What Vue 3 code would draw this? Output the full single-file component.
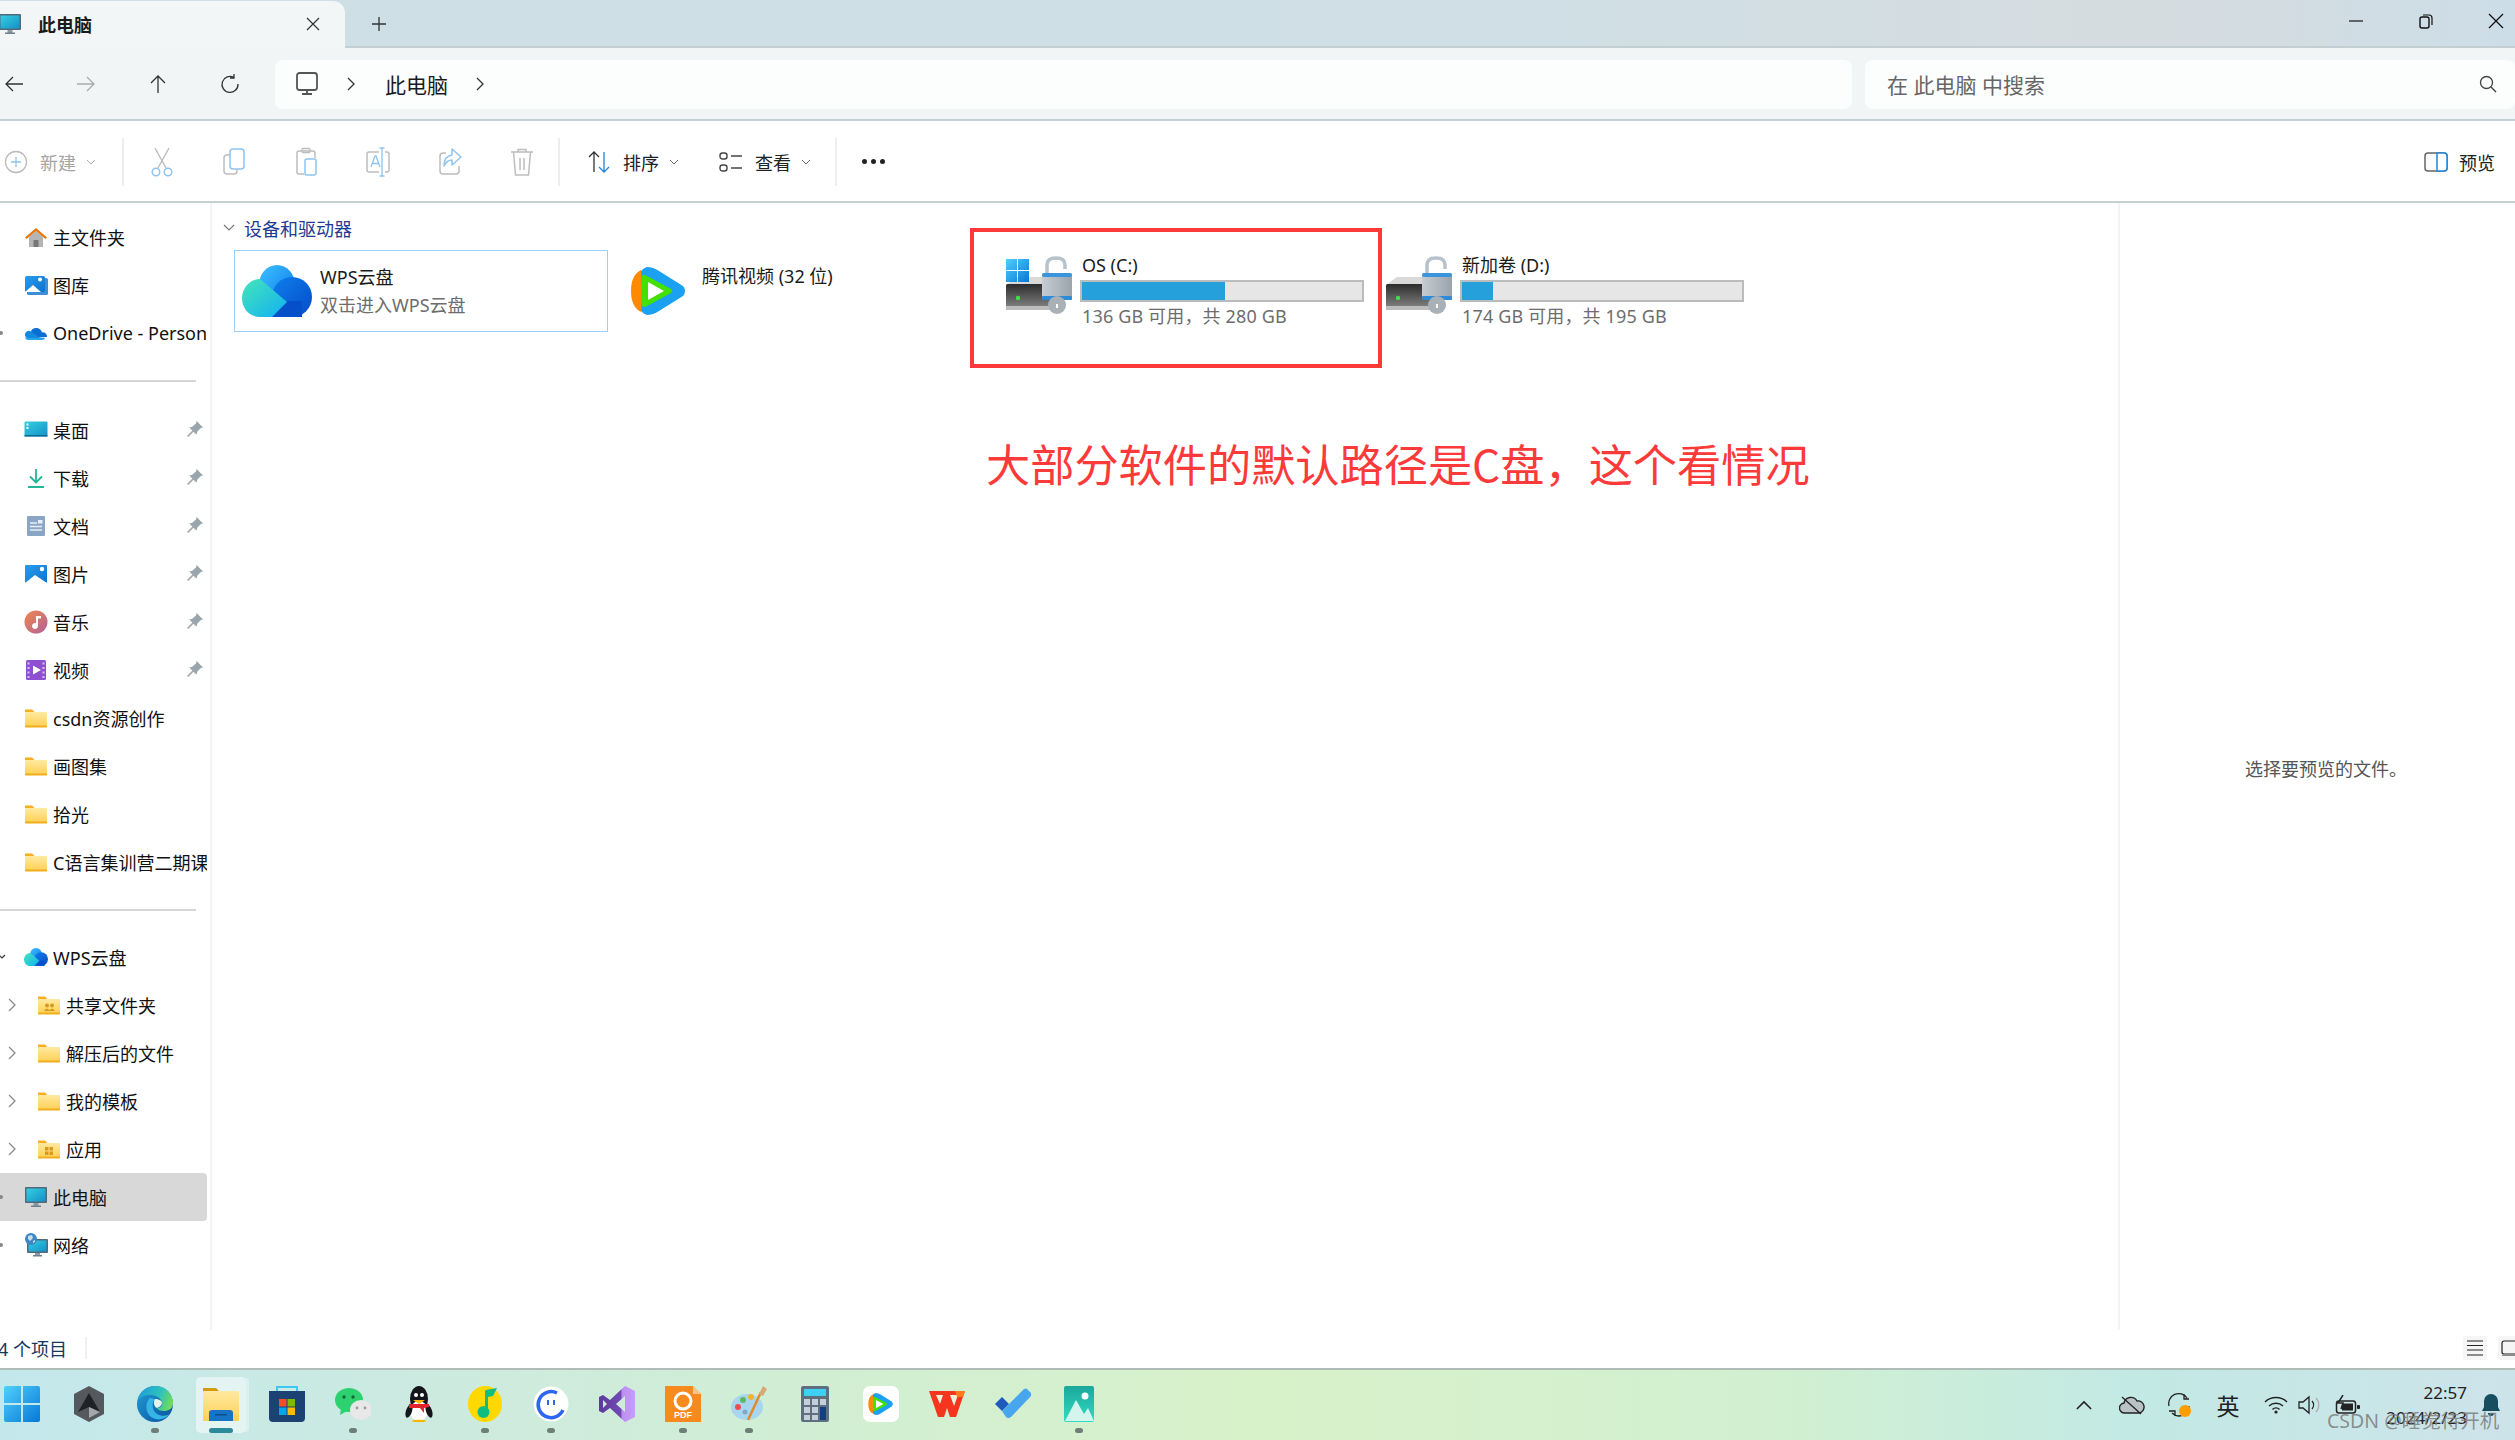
<script setup>
// left navigation, split in the three groups the pane shows
const quickLinks = [
  { label: '主文件夹', icon: 'home' },
  { label: '图库', icon: 'gallery' },
  { label: 'OneDrive - Personal', icon: 'onedrive', dot: true },
]
const pinned = [
  { label: '桌面', icon: 'desktop', pin: true },
  { label: '下载', icon: 'download', pin: true },
  { label: '文档', icon: 'docs', pin: true },
  { label: '图片', icon: 'pictures', pin: true },
  { label: '音乐', icon: 'music', pin: true },
  { label: '视频', icon: 'video', pin: true },
  { label: 'csdn资源创作', icon: 'folder' },
  { label: '画图集', icon: 'folder' },
  { label: '拾光', icon: 'folder' },
  { label: 'C语言集训营二期课', icon: 'folder' },
]
const tree = [
  { label: 'WPS云盘', icon: 'wps', open: true },
  { label: '共享文件夹', icon: 'folder-share', child: true },
  { label: '解压后的文件', icon: 'folder', child: true },
  { label: '我的模板', icon: 'folder', child: true },
  { label: '应用', icon: 'folder-app', child: true },
  { label: '此电脑', icon: 'monitor', dot: true, active: true },
  { label: '网络', icon: 'network', dot: true },
]
const groups = [quickLinks, pinned, tree]

const tools = ['cut', 'copy', 'paste', 'rename', 'share', 'trash']

const drives = [
  { id: 'c', name: 'OS (C:)', used: 51, info: '136 GB 可用，共 280 GB' },
  { id: 'd', name: '新加卷 (D:)', used: 11, info: '174 GB 可用，共 195 GB' },
]

const apps = [
  { icon: 'tb-hex' },
  { icon: 'tb-edge', dot: true },
  { icon: 'tb-explorer', active: true },
  { icon: 'tb-store' },
  { icon: 'tb-wechat', dot: true },
  { icon: 'tb-qq' },
  { icon: 'tb-music', dot: true },
  { icon: 'tb-face', dot: true },
  { icon: 'tb-vs' },
  { icon: 'tb-pdf', dot: true },
  { icon: 'tb-paint', dot: true },
  { icon: 'tb-calc' },
  { icon: 'tb-tencent' },
  { icon: 'tb-wps' },
  { icon: 'tb-todo' },
  { icon: 'tb-photos', dot: true },
]
</script>

<template>
  <div class="window">
    <!-- shared icon sprites -->
    <svg class="sprites" width="0" height="0" aria-hidden="true">
      <defs>
        <linearGradient id="g-folder" x1="0" y1="0" x2="0" y2="1"><stop offset="0" stop-color="#ffe9a0" /><stop offset="1" stop-color="#ffd155" /></linearGradient>
        <linearGradient id="g-screen" x1="0" y1="0" x2="1" y2="1"><stop offset="0" stop-color="#35cfe0" /><stop offset="1" stop-color="#1490c8" /></linearGradient>
        <linearGradient id="g-pic" x1="0" y1="0" x2="1" y2="1"><stop offset="0" stop-color="#2a9cec" /><stop offset="1" stop-color="#0c72cf" /></linearGradient>
        <linearGradient id="g-music" x1="0" y1="0" x2="1" y2="1"><stop offset="0" stop-color="#f0884a" /><stop offset="1" stop-color="#b2609e" /></linearGradient>
        <linearGradient id="g-wps-top" x1="0" y1="0" x2="1" y2="1"><stop offset="0" stop-color="#3dc0ff" /><stop offset="1" stop-color="#0a78ea" /></linearGradient>
        <linearGradient id="g-wps-right" x1="0" y1="0" x2="1" y2="1"><stop offset="0" stop-color="#0e7fee" /><stop offset="1" stop-color="#044cc6" /></linearGradient>
        <linearGradient id="g-wps-left" x1="0" y1="0" x2="1" y2="1"><stop offset="0" stop-color="#45e6b8" /><stop offset="1" stop-color="#10b0f4" /></linearGradient>
        <linearGradient id="g-drive" x1="0" y1="0" x2="0" y2="1"><stop offset="0" stop-color="#2c2c2c" /><stop offset="1" stop-color="#8a8a8a" /></linearGradient>
        <linearGradient id="g-lock" x1="0" y1="0" x2="1" y2="0"><stop offset="0" stop-color="#c6ccd2" /><stop offset="1" stop-color="#9aa4ae" /></linearGradient>
        <linearGradient id="g-win" x1="0" y1="0" x2="1" y2="1"><stop offset="0" stop-color="#4fd0fb" /><stop offset="1" stop-color="#0678d8" /></linearGradient>
        <linearGradient id="g-edge" x1="0" y1="0" x2="1" y2="1"><stop offset="0" stop-color="#1fa0d8" /><stop offset="1" stop-color="#0b4f9e" /></linearGradient>
        <linearGradient id="g-edge2" x1="0" y1="0.300" x2="1" y2="0.600"><stop offset="0" stop-color="#1f9fdc" /><stop offset="0.600" stop-color="#2fc3b8" /><stop offset="1" stop-color="#74dc58" /></linearGradient>
        <linearGradient id="g-vs" x1="0" y1="0" x2="1" y2="0"><stop offset="0" stop-color="#5b3a9a" /><stop offset="0.620" stop-color="#7249b4" /><stop offset="0.630" stop-color="#bb8ff2" /><stop offset="1" stop-color="#c79df6" /></linearGradient>
        <linearGradient id="g-photos" x1="0" y1="0" x2="0" y2="1"><stop offset="0" stop-color="#1ca79a" /><stop offset="1" stop-color="#30dcc0" /></linearGradient>

        <symbol id="folder" viewBox="0 0 24 20"><path d="M1 1.500h7l2.500 2.500H1z" fill="#f4b01f" /><rect x="1" y="4" width="22" height="14.500" rx="1" fill="url(#g-folder)" /><path d="M1 17.500h22v1a1 1 0 0 1-1 1H2a1 1 0 0 1-1-1z" fill="#f0ae1e" /></symbol>
        <symbol id="folder-share" viewBox="0 0 24 20"><use href="#folder" /><circle cx="10" cy="10.500" r="2" fill="#d99a1c" /><circle cx="15" cy="10.500" r="2" fill="#d99a1c" /><path d="M7 16q3-5 6 0zM12 16q3-5 6 0z" fill="#d99a1c" /></symbol>
        <symbol id="folder-app" viewBox="0 0 24 20"><use href="#folder" /><path d="M8 8h3.500v3.500H8zM12.500 8H16v3.500h-3.500zM8 12.500h3.500V16H8zM12.500 12.500H16V16h-3.500z" fill="#d99a1c" /></symbol>
        <symbol id="home" viewBox="0 0 24 24"><path d="M5 12v10h14V12l-7-6z" fill="#b4b4b4" /><rect x="9.500" y="15" width="5" height="7" fill="#777" /><path d="M1 12.500 12 3l11 9.500-1.600 1.400L12 6 2.600 13.900z" fill="#e8760e" /></symbol>
        <symbol id="gallery" viewBox="0 0 24 24"><rect x="3" y="5" width="21" height="17" rx="1.500" fill="#3f8fd6" /><rect x="1" y="3" width="20" height="16" rx="1.500" fill="url(#g-pic)" /><path d="M1 19 9 12l8 7z" fill="#fff" /><circle cx="16" cy="6.500" r="2" fill="#fff" /></symbol>
        <symbol id="onedrive" viewBox="0 0 24 24"><path d="M7 10a6 6 0 0 1 11 1.500 4 4 0 0 1 5 4.500l-14 1z" fill="#0a6fd0" /><path d="M1 15a4 4 0 0 1 6-4.500l9 6.500H3z" fill="#1489e0" /><path d="M3 17h18a3 3 0 0 1-2.500 2H4.500A3 3 0 0 1 1 16z" fill="#27a6ef" /></symbol>
        <symbol id="desktop" viewBox="0 0 24 24"><rect x="0.500" y="3.500" width="23" height="15" rx="1" fill="url(#g-screen)" /><path d="M2.500 5.500h2v2h-2zM2.500 9h2v2h-2z" fill="#fff" /><rect x="0.500" y="17" width="23" height="1.500" fill="#0e6d95" /></symbol>
        <symbol id="download" viewBox="0 0 24 24"><path d="M12 3v13M6 10.500l6 6 6-6M4 21h16" fill="none" stroke="#22b59a" stroke-width="1.800" /></symbol>
        <symbol id="docs" viewBox="0 0 24 24"><rect x="3" y="2" width="18" height="20" rx="1" fill="#8ba5c4" /><path d="M6 9h7M6 12.500h12M6 16h12" stroke="#e8eef5" stroke-width="1.400" /><rect x="14" y="6" width="4.500" height="3.500" fill="#e8eef5" /></symbol>
        <symbol id="pictures" viewBox="0 0 24 24"><rect x="1" y="3" width="22" height="18" rx="1" fill="url(#g-pic)" /><path d="M1 21l10-8 12 8z" fill="#fff" /><circle cx="18" cy="7" r="2.200" fill="#fff" /></symbol>
        <symbol id="music" viewBox="0 0 24 24"><circle cx="12" cy="12" r="11.500" fill="url(#g-music)" /><path d="M12 6h5v2.500h-3V16a3 3 0 1 1-2-2.800z" fill="#fff" /></symbol>
        <symbol id="video" viewBox="0 0 24 24"><rect x="2" y="2" width="20" height="20" rx="1.500" fill="#8e4fd2" /><path d="M9 7.500l8 4.500-8 4.500z" fill="#fff" /><path d="M3.500 4.500h2v2h-2zM3.500 9h2v2h-2zM3.500 13.500h2v2h-2zM3.500 18h2v2h-2zM18.500 4.500h2v2h-2zM18.500 9h2v2h-2zM18.500 13.500h2v2h-2zM18.500 18h2v2h-2z" fill="#d8c2f2" /></symbol>
        <symbol id="monitor" viewBox="0 0 24 24"><rect x="1" y="2" width="22" height="16" rx="1" fill="#52697a" /><rect x="2.500" y="3.500" width="19" height="13" fill="url(#g-screen)" /><rect x="9.500" y="18" width="5" height="3" fill="#8a9aa5" /><rect x="7" y="20.500" width="10" height="1.500" fill="#6f808c" /></symbol>
        <symbol id="network" viewBox="0 0 24 24"><rect x="3" y="6" width="21" height="14" rx="1" fill="#52697a" /><rect x="4.500" y="7.500" width="18" height="11" fill="url(#g-screen)" /><rect x="11" y="20" width="5" height="2" fill="#8a9aa5" /><rect x="9" y="22" width="9" height="1.500" fill="#6f808c" /><circle cx="7" cy="6" r="6" fill="#3f86c4" /><path d="M4 3l4-1 1 3-3 3-2-2zM9 8l2-1v2l-2 1z" fill="#c7dff0" /></symbol>
        <symbol id="wps" viewBox="0 0 70 52"><ellipse cx="35" cy="20" rx="18" ry="20" fill="url(#g-wps-top)" /><circle cx="50" cy="32" r="20" fill="url(#g-wps-right)" /><rect x="25" y="36" width="35" height="16" fill="#0550c8" /><path d="M18 14 45 37 30 52H18C8 52 0 44 0 33 0 23 8 14 18 14z" fill="url(#g-wps-left)" /></symbol>
        <symbol id="tencent" viewBox="0 0 56 48"><path d="M16 0q6 0 12 4l24 15q4 5 0 10L28 44q-6 4-12 4-6-2-8-8V8q2-6 8-8z" fill="#1ba0f2" /><path d="M10 3Q0 8 0 24t10 21q2-21 0-42z" fill="#ff8a00" /><path d="M11 9q2-2 5 0l24 13q2 2 0 4L16 39q-3 2-5 0-2-15 0-30z" fill="#43e000" /><path d="M17 15l16 9-16 9z" fill="#fff" /></symbol>

        <symbol id="drive" viewBox="0 0 68 58">
          <path d="M1 29 12 21h30v8z" fill="#d9d9d9" />
          <rect x="1" y="28" width="58" height="26" rx="1.500" fill="url(#g-drive)" />
          <rect x="1" y="50" width="58" height="4" fill="#bdbdbd" />
          <circle cx="13" cy="42" r="2.200" fill="#3fe04a" />
          <path d="M42 20V9q0-7 9-7t9 7v4" fill="none" stroke="#b7c2cc" stroke-width="3.500" />
          <rect x="37" y="17" width="30" height="27" rx="2" fill="url(#g-lock)" />
          <rect x="37" y="17" width="30" height="4" rx="2" fill="#3b95dd" />
          <rect x="37" y="40" width="30" height="4" rx="1" fill="#2f8ad8" />
          <circle cx="52" cy="49" r="9" fill="#a9b0b6" />
          <rect x="51" y="48" width="2" height="4" fill="#fff" />
        </symbol>

        <symbol id="cut" viewBox="0 0 24 30"><path d="M5 1l11 20M19 1 8 21" stroke="#b9b9b9" stroke-width="1.300" fill="none" /><circle cx="6" cy="25" r="3.800" fill="none" stroke="#8fc4ef" stroke-width="1.500" /><circle cx="18" cy="25" r="3.800" fill="none" stroke="#8fc4ef" stroke-width="1.500" /></symbol>
        <symbol id="copy" viewBox="0 0 24 30"><rect x="8" y="2" width="14" height="20" rx="3" fill="none" stroke="#8fc4ef" stroke-width="1.500" /><path d="M8 8H5a3 3 0 0 0-3 3v13a3 3 0 0 0 3 3h7a3 3 0 0 0 3-3v-2" fill="none" stroke="#bdbdbd" stroke-width="1.500" /></symbol>
        <symbol id="paste" viewBox="0 0 24 30"><path d="M5 4h14a2 2 0 0 1 2 2v5M10 27H5a2 2 0 0 1-2-2V6a2 2 0 0 1 2-2" fill="none" stroke="#bdbdbd" stroke-width="1.500" /><rect x="8" y="1.500" width="8" height="4" rx="1" fill="none" stroke="#bdbdbd" stroke-width="1.300" /><rect x="11" y="12" width="11" height="16" rx="2" fill="none" stroke="#8fc4ef" stroke-width="1.500" /></symbol>
        <symbol id="rename" viewBox="0 0 24 30"><path d="M5 5H3a2 2 0 0 0-2 2v16a2 2 0 0 0 2 2h10M19 5h2a2 2 0 0 1 2 2v16a2 2 0 0 1-2 2h-2M5 5h8" fill="none" stroke="#bdbdbd" stroke-width="1.500" /><path d="M16 1v28M13.500 1h5M13.500 29h5M5 20 9 9h1l4 11M6.500 16.500h6" fill="none" stroke="#8fc4ef" stroke-width="1.300" /></symbol>
        <symbol id="share" viewBox="0 0 24 30"><path d="M8 6H5a3 3 0 0 0-3 3v15a3 3 0 0 0 3 3h13a3 3 0 0 0 3-3v-5" fill="none" stroke="#bdbdbd" stroke-width="1.500" /><path d="M14 2l9 8-9 8v-5q-5 0-8 6 0-10 8-11z" fill="none" stroke="#8fc4ef" stroke-width="1.500" stroke-linejoin="round" /></symbol>
        <symbol id="trash" viewBox="0 0 24 30"><path d="M1 5h22M8 5V2.500h8V5M3.500 5l2 23h13l2-23M10 11v12M14 11v12" fill="none" stroke="#bdbdbd" stroke-width="1.500" /></symbol>

        <symbol id="tb-start" viewBox="0 0 36 36"><path d="M0 2a2 2 0 0 1 2-2h15v17H0zM19 0h15a2 2 0 0 1 2 2v15H19zM0 19h17v17H2a2 2 0 0 1-2-2zM19 19h17v15a2 2 0 0 1-2 2H19z" fill="url(#g-win)" /></symbol>
        <symbol id="tb-hex" viewBox="0 0 36 36"><path d="M18 0l15 8v20l-15 8-15-8V8z" fill="#55595e" /><path d="M18 7 29 26l-11-5-11 5z" fill="#1f2124" /><path d="M18 21l11 5-11 6z" fill="#a4a7ab" /></symbol>
        <symbol id="tb-edge" viewBox="0 0 36 36"><circle cx="18" cy="18" r="18" fill="url(#g-edge)" /><path d="M1 15C3 6 10 0 19 0c11 0 17 9 17 17 0 6-5 8-9 8-4 0-6-1-7-3 4 0 6-3 5-6-2-5-7-7-12-7-6 0-10 2-12 6z" fill="url(#g-edge2)" /><path d="M13 12c-5 4-5 14 1 19 6 4 14 3 19-3-5 3-13 2-16-3-2-4-2-9 1-12z" fill="#36b4e6" /><path d="M18 13c4 0 7 2 7 4 0 2-2 4-5 5-3-1-4-6-2-9z" fill="#e2f4ec" /></symbol>
        <symbol id="tb-explorer" viewBox="0 0 36 36"><path d="M0 2h13l4 4H0z" fill="#d59a10" /><rect x="0" y="5" width="36" height="30" rx="1" fill="url(#g-folder)" /><path d="M6 27q0-3 3-3h18q3 0 3 3v8H6z" fill="#1673c5" /><rect x="12" y="28" width="12" height="1.500" fill="#0c4f8e" /></symbol>
        <symbol id="tb-store" viewBox="0 0 36 36"><path d="M8 6V1h20v5" fill="none" stroke="#3dc8f2" stroke-width="2" /><path d="M0 5h36v27a4 4 0 0 1-4 4H4a4 4 0 0 1-4-4z" fill="#1c4273" /><rect x="10" y="13" width="7.500" height="7.500" fill="#f25022" /><rect x="18.500" y="13" width="7.500" height="7.500" fill="#7fba00" /><rect x="10" y="21.500" width="7.500" height="7.500" fill="#00a4ef" /><rect x="18.500" y="21.500" width="7.500" height="7.500" fill="#ffb900" /></symbol>
        <symbol id="tb-wechat" viewBox="0 0 36 36"><ellipse cx="14" cy="14" rx="14" ry="12" fill="#2ed16f" /><path d="M6 22l-1 7 7-4z" fill="#2ed16f" /><circle cx="9" cy="11" r="1.700" fill="#116b38" /><circle cx="18" cy="11" r="1.700" fill="#116b38" /><ellipse cx="26" cy="24" rx="11" ry="10" fill="#e8e8e8" /><circle cx="22" cy="22" r="1.400" fill="#999" /><circle cx="30" cy="22" r="1.400" fill="#999" /></symbol>
        <symbol id="tb-qq" viewBox="0 0 28 36"><ellipse cx="14" cy="13" rx="9" ry="13" fill="#15151c" /><ellipse cx="14" cy="25" rx="9" ry="10" fill="#fff" /><ellipse cx="4" cy="25" rx="3" ry="7" transform="rotate(18 4 25)" fill="#15151c" /><ellipse cx="24" cy="25" rx="3" ry="7" transform="rotate(-18 24 25)" fill="#15151c" /><circle cx="11" cy="9" r="2" fill="#fff" /><circle cx="17" cy="9" r="2" fill="#fff" /><path d="M8 14h12l-6 4z" fill="#f7b500" /><path d="M4 18h20v3l-5 1v5l-4-5H4z" fill="#e0242c" /><ellipse cx="14" cy="35" rx="7" ry="1.300" fill="#f7b500" /></symbol>
        <symbol id="tb-music" viewBox="0 0 36 36"><ellipse cx="18" cy="18" rx="17" ry="18" fill="#ffd800" /><path d="M19 4l11-2-4 8-5 1v16h-3V5z" fill="#10bd80" /><circle cx="16.500" cy="26" r="6" fill="#10bd80" /></symbol>
        <symbol id="tb-face" viewBox="0 0 36 36"><circle cx="18" cy="18" r="17.500" fill="#fff" /><path d="M24 7a13 13 0 1 0 6 17M7 25" fill="none" stroke="#2d66f0" stroke-width="3.500" /><rect x="14" y="14" width="2" height="5" fill="#2d66f0" /><rect x="20" y="14" width="2" height="5" fill="#2d66f0" /></symbol>
        <symbol id="tb-vs" viewBox="0 0 36 36"><path fill-rule="evenodd" d="M26 0l10 5v26l-10 5-15-14-7 5-4-2V11l4-2 7 5zM26 10l-9 8 9 8zM4 14v8l4-4z" fill="url(#g-vs)" /></symbol>
        <symbol id="tb-pdf" viewBox="0 0 36 36"><path d="M0 0h28l8 8v28H0z" fill="#f78a1f" /><path d="M28 0l8 8h-8z" fill="#f6c58b" /><circle cx="18" cy="15" r="8" fill="none" stroke="#fff" stroke-width="3" /><text x="18" y="32" text-anchor="middle" font-size="9" font-weight="700" font-family="Liberation Sans, sans-serif" fill="#fff">PDF</text></symbol>
        <symbol id="tb-paint" viewBox="0 0 36 36"><ellipse cx="16" cy="21" rx="16" ry="13" fill="#a9d6ef" /><circle cx="7" cy="21" r="3" fill="#e65050" /><circle cx="12" cy="14" r="3" fill="#60b860" /><circle cx="20" cy="11" r="3" fill="#f2b52a" /><circle cx="14" cy="26" r="2.500" fill="#7fa8c8" /><path d="M30 6 17 34" stroke="#e08a2a" stroke-width="2.500" /><path d="M28 8l4-8 4 3-4 7z" fill="#d8a878" /></symbol>
        <symbol id="tb-calc" viewBox="0 0 28 36"><rect width="28" height="36" rx="2" fill="#5f6f7f" /><rect x="3" y="3" width="22" height="7" fill="#3fd0f5" /><path d="M3 13h6v6H3zM11 13h6v6h-6zM19 13h6v6h-6zM3 21h6v6H3zM11 21h6v6h-6zM3 29h6v5H3zM11 29h6v5h-6z" fill="#c5cfda" /><rect x="19" y="21" width="6" height="13" fill="#123f7e" /></symbol>
        <symbol id="tb-tencent" viewBox="0 0 36 36"><rect width="36" height="36" rx="7" fill="#fff" /><svg x="5" y="7" width="26" height="22" viewBox="0 0 56 48"><use href="#tencent" /></svg></symbol>
        <symbol id="tb-wps" viewBox="0 0 36 36"><path d="M0 5h36l-9 26h-6l-3-9-3 9H9z" fill="#f5351e" /><path d="M7 9h7l-3 9zM21 9h8l-4 11z" fill="#f4f0d8" /><path d="M26 5h10l-2 6h-6z" fill="#ff7a1a" /></symbol>
        <symbol id="tb-todo" viewBox="0 0 36 36"><path d="M0 18l7-7 7 7-7 7z" fill="#1d5abc" /><path d="M7 25 29 3q2-1 3 0l4 4q1 2 0 3L16 31q-3 2-5 0z" fill="#47a6ee" /></symbol>
        <symbol id="tb-photos" viewBox="0 0 30 36"><rect width="30" height="36" rx="2" fill="url(#g-photos)" /><circle cx="21" cy="10" r="3.500" fill="#fff" /><path d="M1 35 12 14l8 14 4-6 6 13z" fill="#d4f4ee" /></symbol>
      </defs>
    </svg>

    <header class="titlebar">
      <div class="tab">
        <svg class="tab-icon"><use href="#monitor" /></svg>
        <span class="tab-title">此电脑</span>
        <svg class="tab-close" viewBox="0 0 14 14"><path d="M1 1l12 12M13 1 1 13" stroke="#333" stroke-width="1.200" /></svg>
      </div>
      <svg class="tab-add" viewBox="0 0 16 16"><path d="M8 1v14M1 8h14" stroke="#333" stroke-width="1.300" /></svg>
      <div class="win-controls">
        <svg viewBox="0 0 16 16"><path d="M1 8h14" stroke="#222" stroke-width="1.300" /></svg>
        <svg viewBox="0 0 16 16"><rect x="2" y="4" width="9" height="11" rx="2" fill="none" stroke="#111" stroke-width="1.400" /><path d="M5 2h6a3 3 0 0 1 3 3v7" fill="none" stroke="#111" stroke-width="1.200" /></svg>
        <svg viewBox="0 0 16 16"><path d="M1 1l14 14M15 1 1 15" stroke="#111" stroke-width="1.300" /></svg>
      </div>
    </header>

    <div class="navbar">
      <div class="nav-buttons">
        <span class="nav-btn"><svg viewBox="0 0 20 20"><path d="M19 10H2M9 3l-7 7 7 7" fill="none" stroke="#333" stroke-width="1.300" /></svg></span>
        <span class="nav-btn"><svg viewBox="0 0 20 20"><path d="M1 10h17M11 3l7 7-7 7" fill="none" stroke="#aaa" stroke-width="1.300" /></svg></span>
        <span class="nav-btn"><svg viewBox="0 0 20 20"><path d="M10 19V2M3 9l7-7 7 7" fill="none" stroke="#333" stroke-width="1.300" /></svg></span>
        <span class="nav-btn"><svg viewBox="0 0 20 20"><path d="M14 3.500A8 8 0 1 0 18 10M14 0v4h-4" fill="none" stroke="#333" stroke-width="1.300" /></svg></span>
      </div>
      <div class="address">
        <svg class="addr-monitor" viewBox="0 0 24 24"><rect x="2" y="1" width="20" height="17" rx="2.500" fill="none" stroke="#555" stroke-width="1.800" /><path d="M12 18v3M7 22h10" stroke="#555" stroke-width="1.800" /></svg>
        <svg class="addr-chev" viewBox="0 0 10 16"><path d="M2 2l6 6-6 6" fill="none" stroke="#333" stroke-width="1.300" /></svg>
        <span class="addr-text">此电脑</span>
        <svg class="addr-chev" viewBox="0 0 10 16"><path d="M2 2l6 6-6 6" fill="none" stroke="#333" stroke-width="1.300" /></svg>
      </div>
      <div class="search">
        <span>在 此电脑 中搜索</span>
        <svg viewBox="0 0 18 18"><circle cx="7.500" cy="7.500" r="6" fill="none" stroke="#444" stroke-width="1.300" /><path d="M12 12l5 5" stroke="#444" stroke-width="1.400" /></svg>
      </div>
    </div>

    <div class="toolbar">
      <div class="tb-new">
        <svg class="tb-plus" viewBox="0 0 24 24"><circle cx="12" cy="12" r="10.500" fill="none" stroke="#bbb" stroke-width="1.300" /><path d="M12 7v10M7 12h10" stroke="#8fc4ef" stroke-width="1.300" /></svg>
        <span>新建</span>
        <svg class="tb-chev" viewBox="0 0 10 6"><path d="M1 1l4 4 4-4" fill="none" stroke="#aaa" /></svg>
      </div>
      <i class="tb-sep"></i>
      <span v-for="tool in tools" :key="tool" class="tb-tool"><svg><use :href="'#' + tool" /></svg></span>
      <i class="tb-sep"></i>
      <div class="tb-btn tb-sort">
        <svg class="tb-icon" viewBox="0 0 24 24"><path d="M7 22V2M2 7l5-5 5 5" fill="none" stroke="#333" stroke-width="1.300" /><path d="M17 2v20M12 17l5 5 5-5" fill="none" stroke="#1f86dc" stroke-width="1.300" /></svg>
        <span>排序</span>
        <svg class="tb-chev" viewBox="0 0 10 6"><path d="M1 1l4 4 4-4" fill="none" stroke="#666" /></svg>
      </div>
      <div class="tb-btn tb-view">
        <svg class="tb-icon" viewBox="0 0 24 24"><rect x="1" y="3" width="7" height="6" rx="2.500" fill="none" stroke="#444" stroke-width="1.400" /><rect x="1" y="15" width="7" height="6" rx="2.500" fill="none" stroke="#444" stroke-width="1.400" /><path d="M12 6h11M12 18h11" stroke="#444" stroke-width="1.400" /></svg>
        <span>查看</span>
        <svg class="tb-chev" viewBox="0 0 10 6"><path d="M1 1l4 4 4-4" fill="none" stroke="#666" /></svg>
      </div>
      <i class="tb-sep"></i>
      <span class="tb-more"><b></b><b></b><b></b></span>
      <div class="tb-preview">
        <svg viewBox="0 0 24 20"><rect x="1" y="1" width="22" height="18" rx="3" fill="#fbfbfb" stroke="#666" stroke-width="1.500" /><path d="M13 1h7a3 3 0 0 1 3 3v12a3 3 0 0 1-3 3h-7z" fill="#fff" stroke="#1f86dc" stroke-width="1.500" /></svg>
        <span>预览</span>
      </div>
    </div>

    <div class="body">
      <aside class="sidebar">
        <ul v-for="(group, i) in groups" :key="i" class="nav-group">
          <li v-for="item in group" :key="item.label" class="nav-row" :class="{ active: item.active, child: item.child }">
            <i v-if="item.dot" class="nav-dot"></i>
            <svg v-if="item.open" class="nav-open" viewBox="0 0 8 8"><path d="M1 2l3 3 3-3" fill="none" stroke="#333" stroke-width="1.200" /></svg>
            <svg v-if="item.child" class="nav-arrow" viewBox="0 0 8 14"><path d="M1 1l6 6-6 6" fill="none" stroke="#8a8a8a" stroke-width="1.300" /></svg>
            <svg class="nav-icon"><use :href="'#' + item.icon" /></svg>
            <span class="nav-label">{{ item.label }}</span>
            <svg v-if="item.pin" class="nav-pin" viewBox="0 0 16 16"><path d="M10 0l6 6-2 .5-3.500 3.500-.5 3-3-3-5 5-1-1 5-5-3-3 3-.5L9.500 2z" fill="#9aa5ad" /></svg>
          </li>
        </ul>
      </aside>

      <main class="content">
        <div class="section-head">
          <svg viewBox="0 0 12 8"><path d="M1 1l5 5 5-5" fill="none" stroke="#777" stroke-width="1.100" /></svg>
          <span>设备和驱动器</span>
        </div>

        <div class="tiles">
          <div class="tile selected">
            <div class="tile-icon"><svg class="wps-logo"><use href="#wps" /></svg></div>
            <div class="tile-text">
              <div class="tile-name">WPS云盘</div>
              <div class="tile-sub">双击进入WPS云盘</div>
            </div>
          </div>
          <div class="tile app-tile">
            <div class="tile-icon"><svg class="tencent-logo"><use href="#tencent" /></svg></div>
            <div class="tile-text app-name">
              <div class="tile-name">腾讯视频 (32 位)</div>
            </div>
          </div>
          <div v-for="drive in drives" :key="drive.id" class="tile drive">
            <div class="tile-icon">
              <svg class="drive-icon" viewBox="0 0 68 58">
                <use href="#drive" />
                <path v-if="drive.id === 'c'" d="M1 3h11v11H1zM13 3h11v11H13zM1 15h11v11H1zM13 15h11v11H13z" fill="url(#g-win)" />
              </svg>
            </div>
            <div class="tile-text">
              <div class="drive-name">{{ drive.name }}</div>
              <div class="bar"><div class="bar-fill" :style="{ width: drive.used + '%' }"></div></div>
              <div class="tile-sub">{{ drive.info }}</div>
            </div>
          </div>
        </div>

        <p class="note">大部分软件的默认路径是C盘，这个看情况</p>
        <!-- red annotation frame drawn over the C: tile -->
        <div class="mark"></div>
      </main>

      <aside class="preview-pane">选择要预览的文件。</aside>
    </div>

    <footer class="statusbar">
      <span class="count">4 个项目</span>
      <i class="status-sep"></i>
      <span class="view-btn"><svg viewBox="0 0 18 16"><path d="M1 1h16M1 5.500h16M1 10h16M1 15h16" stroke="#222" stroke-width="1.100" /></svg></span>
      <span class="view-btn large"><svg viewBox="0 0 18 16"><path d="M18 1H3a2 2 0 0 0-2 2v9a2 2 0 0 0 2 2h15M1 16h17" fill="none" stroke="#222" stroke-width="1.200" /></svg></span>
    </footer>

    <nav class="taskbar">
      <span class="start"><svg><use href="#tb-start" /></svg></span>
      <span v-for="app in apps" :key="app.icon" class="app" :class="{ active: app.active }">
        <svg><use :href="'#' + app.icon" /></svg>
        <i v-if="app.dot || app.active" class="app-dot"></i>
      </span>
      <div class="tray">
        <span class="tray-slot"><svg viewBox="0 0 18 12" class="t-chev"><path d="M1 10l8-8 8 8" fill="none" stroke="#222" stroke-width="1.800" /></svg></span>
        <span class="tray-slot"><svg viewBox="0 0 26 20" class="t-cloud"><path d="M6 18a5 5 0 0 1-1-10 7 7 0 0 1 13-2 6 6 0 0 1 2 12z" fill="#b9c2c4" stroke="#222" stroke-width="1.400" /><path d="M3 2l19 17" stroke="#222" stroke-width="1.300" /></svg></span>
        <span class="tray-slot"><svg viewBox="0 0 26 26" class="t-sync"><path d="M2 14A10 10 0 0 1 20 6M17 2v5h5M22 14A10 10 0 0 1 5 21M8 24v-5H2" fill="none" stroke="#222" stroke-width="1.300" /><circle cx="18" cy="19" r="6" fill="#ff9d00" /></svg></span>
        <span class="tray-slot ime">英</span>
        <span class="tray-slot"><svg viewBox="0 0 24 18" class="t-wifi"><path d="M1 6a16 16 0 0 1 22 0M5 10a10.500 10.500 0 0 1 14 0M8.500 13.500a5 5 0 0 1 7 0" fill="none" stroke="#222" stroke-width="1.500" /><circle cx="12" cy="16" r="1.600" fill="#222" /></svg></span>
        <span class="tray-slot vol"><svg viewBox="0 0 24 20" class="t-vol"><path d="M1 7h4l6-5v16l-6-5H1z" fill="none" stroke="#222" stroke-width="1.300" /><path d="M14 6a6 6 0 0 1 0 8" fill="none" stroke="#222" stroke-width="1.300" /><path d="M18 3a10 10 0 0 1 0 14" fill="none" stroke="#aaa" stroke-width="1.300" /></svg></span>
        <span class="tray-slot batt"><svg viewBox="0 0 26 20" class="t-batt"><rect x="1.500" y="6" width="19" height="12" rx="2.500" fill="none" stroke="#222" stroke-width="1.500" /><rect x="7" y="8.500" width="11" height="7" fill="#222" /><rect x="22" y="10" width="3" height="4" rx="1" fill="#222" /><path d="M8 0 3 8h5l-2 6" fill="none" stroke="#222" stroke-width="1.500" /></svg></span>
        <div class="clock">
          <div>22:57</div>
          <div>2024/2/23</div>
        </div>
        <svg class="t-bell" viewBox="0 0 20 24"><path d="M10 1a7 7 0 0 1 7 7v6l2 4H1l2-4V8a7 7 0 0 1 7-7z" fill="#164e5f" /><path d="M7 20h6a3 3 0 0 1-6 0z" fill="#164e5f" /></svg>
      </div>
      <span class="watermark">CSDN @睡觉待开机</span>
    </nav>
  </div>
</template>

<style scoped>
.window {
  position: relative;
  width: 2515px;
  height: 1440px;
  display: flex;
  flex-direction: column;
  overflow: hidden;
  background: #fff;
  color: #1a1a1a;
  font-family: "Noto Sans", "Noto Sans CJK SC", sans-serif;
  font-size: 18px;
}
.sprites {
  position: absolute;
}

/* title bar */
.titlebar {
  height: 48px;
  flex: none;
  display: flex;
  align-items: center;
  background: linear-gradient(90deg, #cddfe5 0%, #cfdfe5 60%, #d5dcdf 85%, #cddde7 100%);
  border-bottom: 2px solid #c3ced3;
  box-sizing: border-box;
}
.tab {
  width: 345px;
  height: 48px;
  margin-top: 4px;
  box-sizing: border-box;
  display: flex;
  align-items: center;
  background: #f2f6f7;
  border-radius: 0 12px 0 0;
  padding-bottom: 3px;
}
.tab-icon {
  width: 24px;
  height: 24px;
  margin-left: -2px;
}
.tab-title {
  margin-left: 16px;
  font-weight: 700;
}
.tab-close {
  width: 14px;
  height: 14px;
  margin-left: auto;
  margin-right: 25px;
}
.tab-add {
  width: 16px;
  height: 16px;
  margin-left: 26px;
  margin-top: 1px;
}
.win-controls {
  margin-left: auto;
  display: flex;
  align-items: center;
  gap: 54px;
  padding-right: 11px;
  padding-bottom: 4px;
}
.win-controls svg {
  width: 16px;
  height: 16px;
}

/* nav bar */
.navbar {
  height: 73px;
  flex: none;
  box-sizing: border-box;
  display: flex;
  align-items: center;
  background: #f2f5f6;
  border-bottom: 2px solid #c3ced3;
  padding-top: 1px;
}
.nav-buttons {
  display: flex;
  margin-left: -22px;
}
.nav-btn {
  width: 72px;
  display: flex;
  justify-content: center;
}
.nav-btn svg {
  width: 20px;
  height: 20px;
}
.address {
  width: 1577px;
  height: 49px;
  margin-left: 9px;
  display: flex;
  align-items: center;
  background: #fcfdfd;
  border-radius: 8px;
}
.addr-monitor {
  width: 24px;
  height: 24px;
  margin-left: 20px;
}
.addr-chev {
  width: 10px;
  height: 16px;
  margin-left: 27px;
}
.addr-text {
  margin-left: 29px;
  margin-right: 4px;
  font-size: 21px;
}
.addr-text + .addr-chev {
  margin-left: 23px;
}
.search {
  flex: 1;
  height: 49px;
  margin-left: 13px;
  padding: 0 18px 0 22px;
  display: flex;
  align-items: center;
  justify-content: space-between;
  background: #fcfdfd;
  border-radius: 8px;
  font-size: 21px;
  color: #666;
}
.search svg {
  width: 18px;
  height: 18px;
}

/* command bar */
.toolbar {
  height: 82px;
  flex: none;
  box-sizing: border-box;
  display: flex;
  align-items: center;
  border-bottom: 2px solid #c5d0d4;
  padding-top: 1px;
}
.tb-new {
  width: 122px;
  display: flex;
  align-items: center;
  color: #a5a5a5;
}
.tb-plus {
  width: 24px;
  height: 24px;
  margin-left: 4px;
  margin-right: 12px;
}
.tb-chev {
  width: 10px;
  height: 6px;
  margin-left: 10px;
}
.tb-sep {
  width: 2px;
  height: 48px;
  background: #eeeeee;
}
.tb-tool {
  width: 72px;
  height: 30px;
  display: flex;
  justify-content: center;
}
.tb-tool:first-of-type {
  margin-left: 2px;
}
.tb-tool svg {
  width: 24px;
  height: 30px;
}
.tb-tool:last-of-type {
  margin-right: 4px;
}
.tb-btn {
  display: flex;
  align-items: center;
  color: #222;
}
.tb-icon {
  width: 24px;
  height: 24px;
  margin-right: 12px;
}
.tb-sort {
  margin-left: 27px;
}
.tb-view {
  margin-left: 40px;
  margin-right: 24px;
}
.tb-view .tb-icon {
  margin-right: 12px;
}
.tb-more {
  display: flex;
  gap: 4px;
  margin-left: 25px;
}
.tb-more b {
  width: 5px;
  height: 5px;
  border-radius: 50%;
  background: #222;
}
.tb-preview {
  margin-left: auto;
  margin-right: 20px;
  display: flex;
  align-items: center;
  gap: 11px;
  color: #222;
}
.tb-preview svg {
  width: 24px;
  height: 20px;
}

/* main area */
.body {
  height: 1127px;
  flex: none;
  display: flex;
}
.sidebar {
  width: 210px;
  flex: none;
  box-sizing: content-box;
  border-right: 2px solid #f3f3f3;
  overflow: hidden;
}
.nav-group {
  list-style: none;
  margin: 0;
  padding: 0 0 23px;
  border-bottom: 2px solid #d6d6d6;
  width: 196px;
  margin-top: 10px;
}
.nav-group:nth-child(2) {
  margin-top: 24px;
}
.nav-group:nth-child(3) {
  border-bottom: 0;
  margin-top: 22px;
}
.nav-row {
  position: relative;
  width: 207px;
  height: 48px;
  display: flex;
  align-items: center;
  padding-left: 24px;
  box-sizing: border-box;
  white-space: nowrap;
  overflow: hidden;
  color: #111;
}
.nav-row.child {
  padding-left: 37px;
}
.nav-row.active {
  background: #d8d8d8;
  border-radius: 0 4px 4px 0;
}
.nav-icon {
  width: 24px;
  height: 24px;
  flex: none;
  margin-right: 5px;
}
.nav-row.child .nav-icon {
  height: 20px;
}
.nav-dot {
  position: absolute;
  left: -1px;
  top: 22px;
  width: 4px;
  height: 4px;
  border-radius: 50%;
  background: #888;
}
.nav-open {
  position: absolute;
  left: -2px;
  top: 20px;
  width: 8px;
  height: 8px;
}
.nav-arrow {
  position: absolute;
  left: 8px;
  top: 17px;
  width: 8px;
  height: 14px;
}
.nav-pin {
  position: absolute;
  left: 186px;
  top: 15px;
  width: 17px;
  height: 17px;
}
.content {
  position: relative;
  flex: 1;
  padding-left: 22px;
  min-width: 0;
}
.section-head {
  height: 24px;
  margin-top: 13px;
  margin-left: -11px;
  display: flex;
  align-items: center;
  gap: 9px;
  color: #1f3a93;
}
.section-head svg {
  width: 12px;
  height: 8px;
}
.tiles {
  margin-top: 10px;
  display: flex;
  gap: 6px;
}
.tile {
  width: 374px;
  height: 82px;
  box-sizing: border-box;
  border: 1px solid transparent;
  display: flex;
  align-items: center;
  flex: none;
}
.tile.selected {
  border-color: #99d1ff;
}
.tile-icon {
  width: 85px;
  flex: none;
  display: flex;
  justify-content: center;
}
.tile.selected .tile-icon {
  margin-left: -1px;
  margin-right: 1px;
}
.tile.app-tile .tile-icon {
  width: 87px;
}
.tile.drive .tile-icon {
  width: 87px;
}
.wps-logo {
  width: 70px;
  height: 52px;
}
.tencent-logo {
  width: 56px;
  height: 48px;
}
.drive-icon {
  width: 68px;
  height: 58px;
}
.tile-text {
  flex: 1;
  line-height: 28px;
  min-width: 0;
}
.app-name {
  margin-bottom: 30px;
}
.tile-sub {
  color: #6d6d6d;
}
.drive {
  align-items: flex-start;
}
.drive .tile-sub {
  letter-spacing: 0.15px;
}
.drive .tile-icon {
  align-self: flex-start;
  padding-top: 5px;
}
.drive-name {
  line-height: 29px;
}
.bar {
  width: 284px;
  height: 22px;
  box-sizing: border-box;
  margin-left: -2px;
  border: 2px solid #bcbcbc;
  background: #e6e6e6;
}
.bar-fill {
  height: 100%;
  background: #26a0da;
}
.note {
  margin: 101px 0 0 752px;
  font-size: 44.2px;
  line-height: 60px;
  color: #fc3a3a;
  font-family: "Noto Sans CJK SC", sans-serif;
  white-space: nowrap;
}
.mark {
  position: absolute;
  left: 758px;
  top: 25px;
  width: 412px;
  height: 140px;
  box-sizing: border-box;
  border: 4px solid #fc3a3a;
}
.preview-pane {
  width: 397px;
  flex: none;
  box-sizing: border-box;
  border-left: 2px solid #f3f3f3;
  padding-top: 554px;
  padding-left: 125px;
  font-size: 18px;
  line-height: 24px;
  color: #555;
}

/* status bar */
.statusbar {
  height: 38px;
  flex: none;
  display: flex;
  align-items: center;
  padding-bottom: 2px;
  box-sizing: border-box;
}
.count {
  margin-left: -2px;
  color: #17365d;
  white-space: nowrap;
}
.status-sep {
  width: 2px;
  height: 22px;
  margin-left: 18px;
  background: #f0f0f0;
}
.view-btn {
  width: 24px;
  height: 24px;
  margin-left: auto;
  display: flex;
  align-items: center;
  justify-content: center;
  background: #f5f5f5;
  border-radius: 3px;
}
.view-btn svg {
  width: 18px;
  height: 16px;
}
.view-btn.large {
  margin-left: 11px;
  margin-right: -7px;
}

/* taskbar */
.taskbar {
  position: relative;
  height: 72px;
  flex: none;
  box-sizing: border-box;
  display: flex;
  align-items: center;
  border-top: 2px solid #b0bcb8;
  background: linear-gradient(90deg, #c3e8ec 0%, #cdeadf 18%, #d2efd2 35%, #d7f1c9 50%, #d2f0d0 70%, #c2e9e4 85%, #cde3ea 100%);
}
.start {
  width: 56px;
  flex: none;
  display: flex;
}
.start svg {
  width: 36px;
  height: 36px;
  margin-left: 4px;
  margin-bottom: 2px;
}
.app {
  position: relative;
  width: 66px;
  height: 56px;
  flex: none;
  display: flex;
  align-items: center;
  justify-content: center;
  box-sizing: border-box;
  padding-bottom: 2px;
}
.app svg {
  width: 36px;
  height: 36px;
}
.app.active::before {
  content: "";
  position: absolute;
  left: 8px;
  right: 8px;
  top: 0;
  bottom: 0;
  background: rgba(255, 255, 255, 0.5);
  border-radius: 5px;
  box-shadow: 4px 0 0 -1px rgba(255, 255, 255, 0.35);
}
.app.active svg {
  position: relative;
}
.app-dot {
  position: absolute;
  left: 29px;
  bottom: 0;
  width: 8px;
  height: 5px;
  border-radius: 3px;
  background: #6e7f78;
}
.app.active .app-dot {
  left: 21px;
  width: 24px;
  background: #2b8a9c;
}
.tray {
  margin-left: auto;
  display: flex;
  align-items: center;
  padding-right: 12px;
}
.tray-slot {
  width: 48px;
  display: flex;
  justify-content: center;
  align-items: center;
}
.tray-slot.vol {
  width: 20px;
  overflow: visible;
}
.tray-slot.batt {
  width: 56px;
}
.ime {
  font-size: 23px;
  color: #222;
}
.t-chev {
  width: 16px;
  height: 11px;
}
.t-cloud {
  width: 26px;
  height: 20px;
}
.t-sync {
  width: 26px;
  height: 26px;
}
.t-wifi {
  width: 24px;
  height: 18px;
}
.t-vol {
  width: 24px;
  height: 20px;
  flex: none;
}
.t-batt {
  width: 26px;
  height: 20px;
}
.clock {
  width: 91px;
  flex: none;
  margin-right: 12px;
  text-align: right;
  font-size: 17px;
  line-height: 25px;
  color: #222;
  white-space: nowrap;
}
.t-bell {
  width: 24px;
  height: 24px;
}
.watermark {
  position: absolute;
  left: 2327px;
  top: 38px;
  font-size: 19.5px;
  line-height: 26px;
  color: rgba(125, 125, 125, 0.85);
  white-space: nowrap;
}
</style>
